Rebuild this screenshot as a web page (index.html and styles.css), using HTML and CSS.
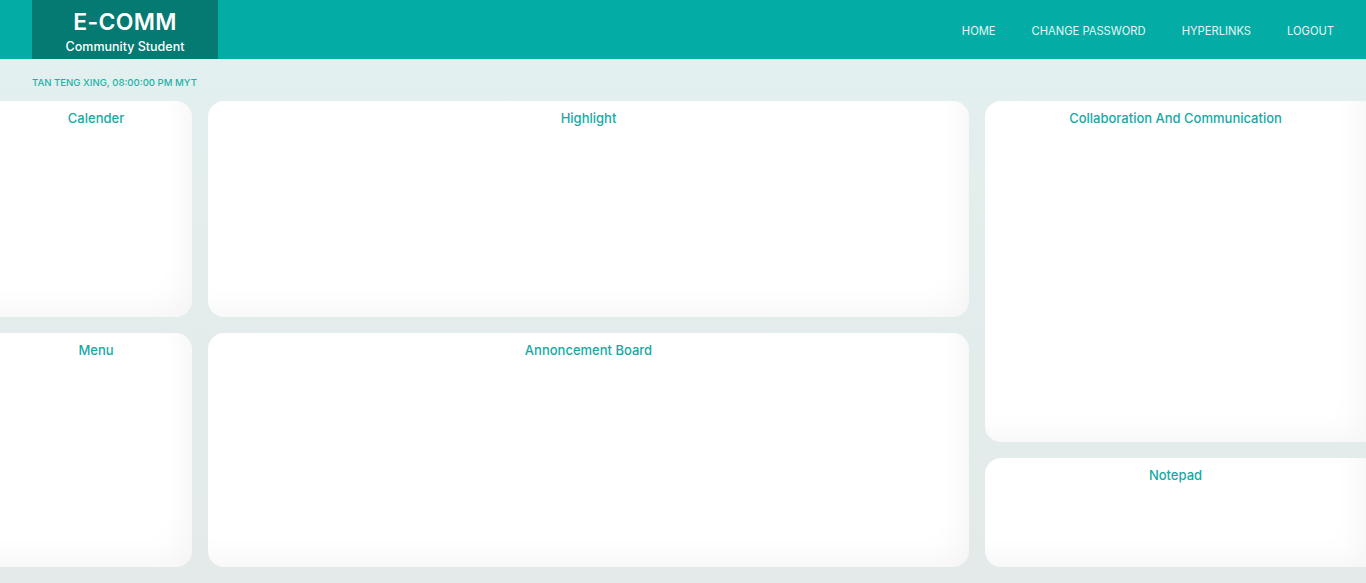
FILE: index.html
```html
<!DOCTYPE html>
<html lang="en">
<head>
<meta charset="utf-8">
<title>E-COMM</title>
<link rel="stylesheet" href="styles.css">
</head>
<body>
<header class="topbar">
  <div class="brand">
    <div class="brand-title">E-COMM</div>
    <div class="brand-sub">Community Student</div>
  </div>
  <nav class="nav">
    <a href="#">HOME</a>
    <a href="#">CHANGE PASSWORD</a>
    <a href="#">HYPERLINKS</a>
    <a href="#">LOGOUT</a>
  </nav>
</header>
<div class="status">TAN TENG XING, 08:00:00 PM MYT</div>
<main class="grid">
  <section class="card calendar"><h2>Calender</h2></section>
  <section class="card highlight"><h2>Highlight</h2></section>
  <section class="card collab"><h2>Collaboration And Communication</h2></section>
  <section class="card menu"><h2>Menu</h2></section>
  <section class="card board"><h2>Annoncement Board</h2></section>
  <section class="card notepad"><h2>Notepad</h2></section>
</main>
</body>
</html>
```
FILE: styles.css
```css
* { box-sizing: border-box; }
html, body { margin: 0; padding: 0; }
body {
  font-family: "Inter", "Liberation Sans", sans-serif;
  background: linear-gradient(180deg, #e1f1f0 0%, #e3eeed 30%, #e4eaea 100%);
  height: 583px;
  overflow: hidden;
}
.topbar {
  height: 59px;
  background: #03ada6;
  display: flex;
  align-items: stretch;
  justify-content: space-between;
  padding: 0 32px;
}
.brand {
  width: 186px;
  background: #047a72;
  color: #fff;
  display: flex;
  flex-direction: column;
  align-items: center;
  padding-top: 8px;
}
.brand-title {
  font-size: 23px;
  font-weight: 600;
  line-height: 28px;
  letter-spacing: 0.3px;
}
.brand-sub {
  font-size: 12.5px;
  font-weight: 500;
  line-height: 16px;
  margin-top: 3px;
}
.nav {
  display: flex;
  align-items: center;
  gap: 36px;
  padding-top: 2px;
}
.nav a {
  color: #e6f5f4;
  text-decoration: none;
  font-size: 11.2px;
  font-weight: 400;
}
.status {
  padding: 18px 32px 0;
  height: 42px;
  font-size: 9.6px;
  font-weight: 500;
  color: #1fb0a8;
}
.grid {
  display: grid;
  grid-template-columns: 192px 761px 1fr;
  grid-template-rows: 216px 109px 109px;
  gap: 16px;
}
.card {
  background: #fff;
  border-radius: 16px;
  box-shadow: inset -18px -18px 30px -12px rgba(0, 0, 0, 0.045);
  padding-top: 9px;
  text-align: center;
}
.card h2 {
  margin: 0;
  font-size: 13px;
  font-weight: 500;
  color: #14aaa2;
  line-height: 16px;
}
.calendar { grid-column: 1; grid-row: 1; border-radius: 0 16px 16px 0; }
.highlight { grid-column: 2; grid-row: 1; }
.collab { grid-column: 3; grid-row: 1 / span 2; border-radius: 16px 0 0 16px; }
.menu { grid-column: 1; grid-row: 2 / span 2; border-radius: 0 16px 16px 0; }
.board { grid-column: 2; grid-row: 2 / span 2; }
.notepad { grid-column: 3; grid-row: 3; border-radius: 16px 0 0 16px; }
```
